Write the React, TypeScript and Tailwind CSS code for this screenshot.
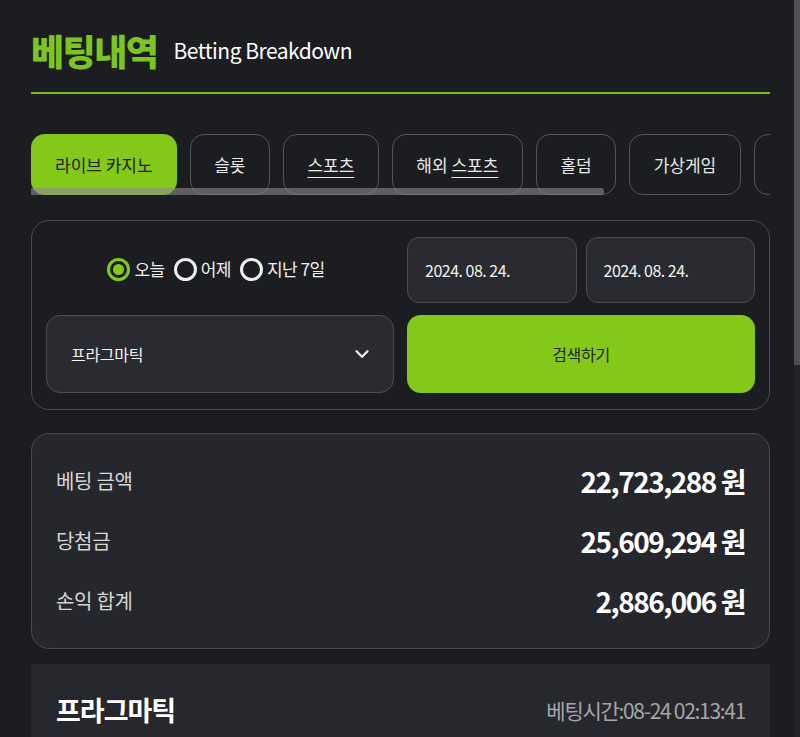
import { ChevronDown } from "lucide-react";

const font = { fontFamily: '"Noto Sans CJK KR", "Noto Sans", sans-serif' };

type Tab = { label: React.ReactNode; active?: boolean };

const tabs: Tab[] = [
  { label: "라이브 카지노", active: true },
  { label: "슬롯" },
  { label: <span className="underline underline-offset-[5px]">스포츠</span> },
  {
    label: (
      <>
        해외 <span className="underline underline-offset-[5px]">스포츠</span>
      </>
    ),
  },
  { label: "홀덤" },
  { label: "가상게임" },
  { label: "" },
];

const summary = [
  { label: "베팅 금액", value: "22,723,288" },
  { label: "당첨금", value: "25,609,294" },
  { label: "손익 합계", value: "2,886,006" },
];

function Radio({ label, checked }: { label: string; checked?: boolean }) {
  return (
    <label className="flex items-center gap-[4px]">
      {checked ? (
        <span className="w-[23px] h-[23px] rounded-full border-[3px] border-[#84c91a] flex items-center justify-center">
          <span className="w-[11px] h-[11px] rounded-full bg-[#84c91a]" />
        </span>
      ) : (
        <span className="w-[23px] h-[23px] rounded-full border-[3px] border-[#eeeeee]" />
      )}
      <span className="text-[17px] text-[#f0f0f0] tracking-[-0.5px]">{label}</span>
    </label>
  );
}

export default function App() {
  return (
    <div
      className="relative w-[800px] h-[737px] overflow-hidden bg-[#1c1d21]"
      style={font}
    >
      <div className="pl-[31px] pr-[30px]">
        {/* header */}
        <div className="flex items-center gap-[16px] pt-[24px] pb-[16px] border-b-2 border-[#79bf1f]">
          <h1 className="text-[36px] font-black text-[#7cc51e] tracking-[-1.5px] leading-[52px]">
            베팅내역
          </h1>
          <span className="text-[21px] text-white tracking-[-0.5px] mt-[2px]">
            Betting Breakdown
          </span>
        </div>

        {/* tabs */}
        <div className="relative mt-[40px] overflow-hidden">
          <div className="flex gap-[13px] w-max">
            {tabs.map((t, i) => (
              <button
                key={i}
                className={
                  t.active
                    ? "h-[61px] px-[24px] rounded-[14px] bg-[#84c91a] text-[17px] text-[#1e2410]"
                    : "h-[61px] min-w-[79px] px-[23.5px] rounded-[14px] border border-[#55565b] text-[17px] text-[#e8e8e8]"
                }
              >
                {t.label}
              </button>
            ))}
          </div>
          <div className="absolute left-0 top-[54px] h-[7px] w-[573px] bg-[#8a8a8f]/60 rounded-r-[3px]" />
        </div>

        {/* filter */}
        <div className="mt-[25px] rounded-[18px] border border-[#4a4b50] p-[14px] pt-[16px] pb-[16px] grid grid-cols-2 gap-x-[13px] gap-y-[12px]">
          <div className="flex items-center justify-center gap-[9px] pb-[2px] pr-[8px]">
            <Radio label="오늘" checked />
            <Radio label="어제" />
            <Radio label="지난 7일" />
          </div>
          <div className="grid grid-cols-2 gap-[9px]">
            {["2024. 08. 24.", "2024. 08. 24."].map((d, i) => (
              <div
                key={i}
                className="h-[66px] rounded-[12px] bg-[#2a2b31] border border-[#4d4e53] flex items-center px-[17px] text-[16px] text-[#f2f2f2] tracking-[-0.5px]"
              >
                {d}
              </div>
            ))}
          </div>
          <div className="h-[78px] rounded-[14px] bg-[#2a2b31] border border-[#4d4e53] flex items-center justify-between pl-[24px] pr-[20px]">
            <span className="text-[16px] text-[#f2f2f2] tracking-[-0.3px]">프라그마틱</span>
            <ChevronDown size={22} strokeWidth={2.5} color="#f2f2f2" />
          </div>
          <button className="h-[78px] rounded-[14px] bg-[#84c91a] text-[16px] text-[#1e2410] tracking-[-0.3px]">
            검색하기
          </button>
        </div>

        {/* summary */}
        <div className="mt-[23px] rounded-[18px] border border-[#4a4b50] bg-[#26272d] px-[24px] py-[17px] flex flex-col">
          {summary.map((s) => (
            <div key={s.label} className="h-[60px] flex items-center justify-between">
              <span className="text-[20px] text-[#d6d6d6] tracking-[-0.3px]">{s.label}</span>
              <span className="text-[28px] font-bold text-white tracking-[-1.5px]">
                {s.value} 원
              </span>
            </div>
          ))}
        </div>

        {/* detail card */}
        <div className="mt-[15px] bg-[#27282e] px-[25px] pt-[26px] pb-[30px] flex items-center justify-between">
          <span className="text-[27px] font-bold text-white tracking-[-1px]">프라그마틱</span>
          <span className="text-[21px] text-[#a6a6a8] tracking-[-1.3px]">베팅시간:08-24 02:13:41</span>
        </div>
      </div>

      {/* page scrollbar */}
      <div className="absolute right-0 top-0 w-[6px] h-full bg-[#232428]">
        <div className="w-full h-[365px] bg-[#505054]" />
      </div>
    </div>
  );
}
